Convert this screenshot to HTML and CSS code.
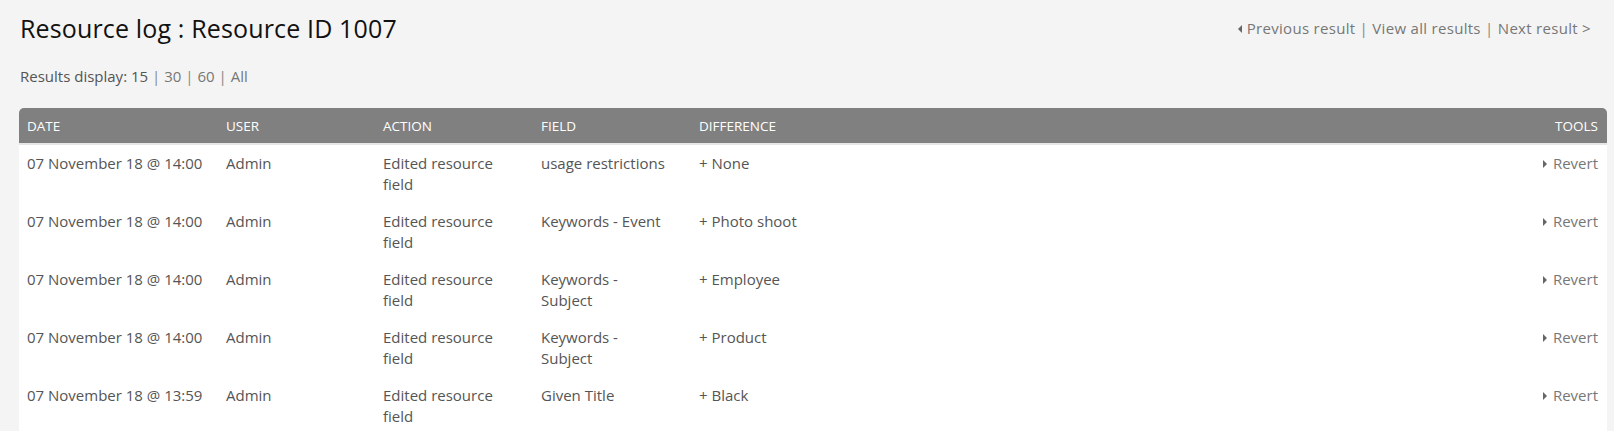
FILE: index.html
```html
<!DOCTYPE html>
<html lang="en">
<head>
	<meta charset="UTF-8">
	<meta name="viewport" content="width=device-width, initial-scale=1">
	<title>Resource log : Resource ID 1007</title>
	<link rel="stylesheet" href="styles.css">
</head>
<body>
	<div class="page">
		<div class="title-bar">
			<h1>Resource log : Resource ID 1007</h1>
			<div class="result-nav">
				<a href="#"><span class="arrow-left"></span>Previous result</a>
				<span class="sep">|</span>
				<a href="#">View all results</a>
				<span class="sep">|</span>
				<a href="#">Next result &gt;</a>
			</div>
		</div>

		<div class="per-page">
			Results display: <span class="current">15</span>
			<span class="sep">|</span> <a href="#">30</a>
			<span class="sep">|</span> <a href="#">60</a>
			<span class="sep">|</span> <a href="#">All</a>
		</div>

		<table class="log-table">
			<colgroup>
				<col class="col-date">
				<col class="col-user">
				<col class="col-action">
				<col class="col-field">
				<col>
				<col class="col-tools">
			</colgroup>
			<thead>
				<tr>
					<th>Date</th>
					<th>User</th>
					<th>Action</th>
					<th>Field</th>
					<th>Difference</th>
					<th class="tools">Tools</th>
				</tr>
			</thead>
			<tbody>
				<tr>
					<td>07 November 18 @ 14:00</td>
					<td>Admin</td>
					<td class="narrow">Edited resource field</td>
					<td class="narrow">usage restrictions</td>
					<td>+ None</td>
					<td class="tools"><a href="#"><span class="arrow-right"></span>Revert</a></td>
				</tr>
				<tr>
					<td>07 November 18 @ 14:00</td>
					<td>Admin</td>
					<td class="narrow">Edited resource field</td>
					<td class="narrow">Keywords - Event</td>
					<td>+ Photo shoot</td>
					<td class="tools"><a href="#"><span class="arrow-right"></span>Revert</a></td>
				</tr>
				<tr>
					<td>07 November 18 @ 14:00</td>
					<td>Admin</td>
					<td class="narrow">Edited resource field</td>
					<td class="narrow">Keywords - Subject</td>
					<td>+ Employee</td>
					<td class="tools"><a href="#"><span class="arrow-right"></span>Revert</a></td>
				</tr>
				<tr>
					<td>07 November 18 @ 14:00</td>
					<td>Admin</td>
					<td class="narrow">Edited resource field</td>
					<td class="narrow">Keywords - Subject</td>
					<td>+ Product</td>
					<td class="tools"><a href="#"><span class="arrow-right"></span>Revert</a></td>
				</tr>
				<tr>
					<td>07 November 18 @ 13:59</td>
					<td>Admin</td>
					<td class="narrow">Edited resource field</td>
					<td class="narrow">Given Title</td>
					<td>+ Black</td>
					<td class="tools"><a href="#"><span class="arrow-right"></span>Revert</a></td>
				</tr>
			</tbody>
		</table>
	</div>
</body>
</html>
```

FILE: styles.css
```css
:root {
	--page-bg: #f4f4f4;
	--text-color: #555;
	--link-color: #777;
	--header-bg: #808080;
	--header-line: #e6e6e6;
}

body {
	font-family: "Open Sans", Arial, sans-serif;
	margin: 0;
	padding: 0;
	background-color: var(--page-bg);
	color: var(--text-color);
}

a {
	color: var(--link-color);
	text-decoration: none;
}

.page {
	padding: 14px 7px 0 19px;
}

.title-bar {
	display: flex;
	justify-content: space-between;
	align-items: center;
}

.title-bar h1 {
	margin: 0 0 0 1px;
	font-size: 25px;
	font-weight: 500;
	letter-spacing: 0.15px;
	line-height: 28px;
	color: #111;
}

.result-nav {
	font-size: 15px;
	letter-spacing: 0.3px;
	line-height: 20px;
	color: var(--link-color);
	padding-right: 16px;
}

.sep {
	color: #888;
}

.arrow-left {
	display: inline-block;
	width: 0;
	height: 0;
	border-top: 4px solid transparent;
	border-bottom: 4px solid transparent;
	border-right: 4px solid #666;
	margin-right: 5px;
	vertical-align: 1px;
}

.arrow-right {
	display: inline-block;
	width: 0;
	height: 0;
	border-top: 4px solid transparent;
	border-bottom: 4px solid transparent;
	border-left: 4px solid #666;
	margin-right: 6px;
	vertical-align: 1px;
}

.per-page {
	margin: 24px 0 0 1px;
	font-size: 15px;
	line-height: 20px;
	color: var(--text-color);
}

.log-table {
	width: 100%;
	margin-top: 22px;
	border-collapse: separate;
	border-spacing: 0;
	table-layout: fixed;
	font-size: 15px;
}

.col-date { width: 199px; }
.col-user { width: 157px; }
.col-action { width: 158px; }
.col-field { width: 158px; }
.col-tools { width: 120px; }

.log-table th {
	height: 35px;
	padding: 0 8px;
	background: var(--header-bg);
	color: #fff;
	font-size: 13.5px;
	font-weight: normal;
	text-align: left;
	text-transform: uppercase;
	border-bottom: 2px solid var(--header-line);
}

.log-table th:first-child {
	border-top-left-radius: 5px;
}

.log-table th:last-child {
	border-top-right-radius: 5px;
}

.log-table td {
	padding: 8px;
	line-height: 21px;
	vertical-align: top;
	background: #fff;
}

.log-table td.narrow {
	padding-right: 23px;
}

.log-table .tools {
	text-align: right;
	padding-right: 9px;
}
```
